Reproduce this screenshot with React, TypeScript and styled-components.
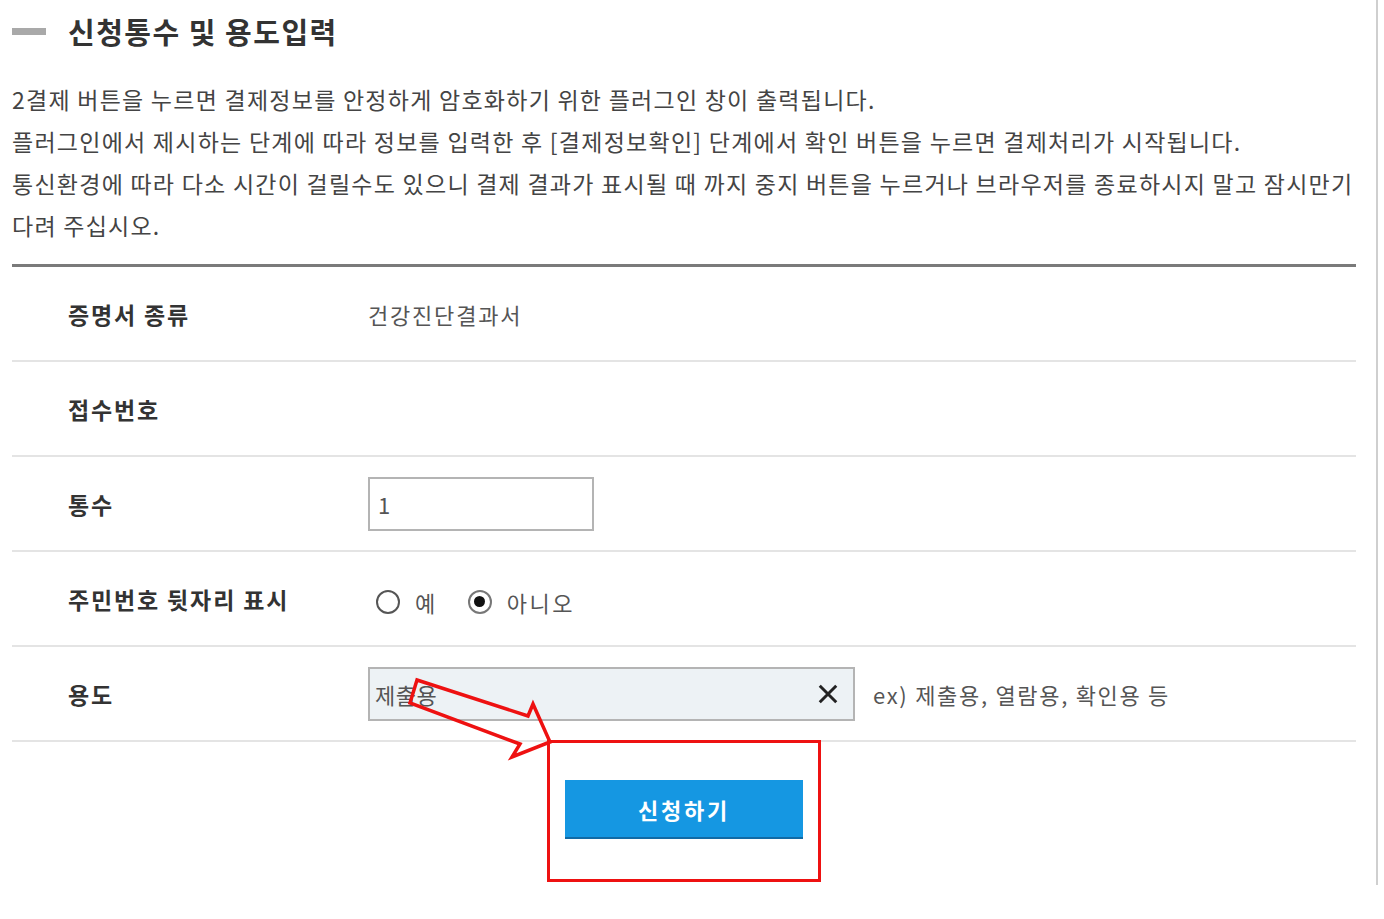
import React from "react";
import styled, { createGlobalStyle } from "styled-components";

const GlobalStyle = createGlobalStyle`
    html, body {
        margin: 0;
        padding: 0;
        background: #ffffff;
    }
    body {
        font-family: "Noto Sans CJK KR", "Noto Sans", sans-serif;
        color: #333;
    }
`;

const descLines = [
    "2결제 버튼을 누르면 결제정보를 안정하게 암호화하기 위한 플러그인 창이 출력됩니다.",
    "플러그인에서 제시하는 단계에 따라 정보를 입력한 후 [결제정보확인] 단계에서 확인 버튼을 누르면 결제처리가 시작됩니다.",
    "통신환경에 따라 다소 시간이 걸릴수도 있으니 결제 결과가 표시될 때 까지 중지 버튼을 누르거나 브라우저를 종료하시지 말고 잠시만기",
    "다려 주십시오.",
];

const App: React.FC = () => {
    return (
        <Page>
            <GlobalStyle />
            <Frame>
                <TitleBar>
                    <TitleMark />
                    <Title>신청통수 및 용도입력</Title>
                </TitleBar>

                <Description>
                    {descLines.map((line) => (
                        <DescLine key={line}>{line}</DescLine>
                    ))}
                </Description>

                <Table>
                    <Row>
                        <Label>증명서 종류</Label>
                        <Value>건강진단결과서</Value>
                    </Row>
                    <Row>
                        <Label>접수번호</Label>
                        <Value />
                    </Row>
                    <Row>
                        <Label>통수</Label>
                        <Value>
                            <CountInput>1</CountInput>
                        </Value>
                    </Row>
                    <Row>
                        <Label>주민번호 뒷자리 표시</Label>
                        <Value>
                            <RadioGroup>
                                <RadioItem>
                                    <RadioCircle />
                                    <RadioText>예</RadioText>
                                </RadioItem>
                                <RadioItem>
                                    <RadioCircle checked />
                                    <RadioText>아니오</RadioText>
                                </RadioItem>
                            </RadioGroup>
                        </Value>
                    </Row>
                    <Row>
                        <Label>용도</Label>
                        <Value>
                            <PurposeInput>
                                <PurposeText>제출용</PurposeText>
                                <ClearIcon viewBox="0 0 24 24">
                                    <path d="M3 3 L21 21 M21 3 L3 21" />
                                </ClearIcon>
                            </PurposeInput>
                            <Hint>ex) 제출용, 열람용, 확인용 등</Hint>
                        </Value>
                    </Row>
                </Table>

                <ButtonSection>
                    <Highlight>
                        <SubmitButton>신청하기</SubmitButton>
                    </Highlight>
                </ButtonSection>
            </Frame>

            <Arrow viewBox="0 0 160 100">
                <polygon points="17,10 128,46 133,34 150,72 112,87 120,74 10,33" />
            </Arrow>
        </Page>
    );
};

export default App;

const Page = styled.div`
    position: relative;
    width: 1384px;
    height: 919px;
    overflow: hidden;
    background: #fff;
`;

const Frame = styled.div`
    width: 1378px;
    height: 885px;
    box-sizing: border-box;
    border-right: 2px solid #cfcfcf;
    padding: 11px 20px 0 12px;
`;

const TitleBar = styled.div`
    display: flex;
    align-items: center;
    height: 40px;
    gap: 22px;
`;

const TitleMark = styled.div`
    width: 34px;
    height: 7px;
    background: #a9a9a9;
`;

const Title = styled.h2`
    margin: 0;
    font-size: 29px;
    font-weight: 700;
    color: #333;
    letter-spacing: 1.5px;
    line-height: 40px;
`;

const Description = styled.div`
    margin-top: 27px;
    font-size: 23px;
    line-height: 42px;
    color: #444;
    letter-spacing: 1.25px;
`;

const DescLine = styled.div`
    white-space: nowrap;
`;

const Table = styled.div`
    margin-top: 18px;
    border-top: 3px solid #7a7a7a;
`;

const Row = styled.div`
    display: grid;
    grid-template-columns: 356px 1fr;
    align-items: center;
    height: 93px;
    border-bottom: 2px solid #e4e4e4;
`;

const Label = styled.div`
    padding-left: 56px;
    font-size: 23px;
    font-weight: 700;
    color: #333;
    letter-spacing: 1.85px;
`;

const Value = styled.div`
    display: flex;
    align-items: center;
    font-size: 22px;
    color: #555;
    letter-spacing: 1.8px;
`;

const CountInput = styled.div`
    box-sizing: border-box;
    width: 226px;
    height: 54px;
    border: 2px solid #b4b4b4;
    padding-left: 8px;
    display: flex;
    align-items: center;
    font-size: 22px;
    color: #555;
`;

const RadioGroup = styled.div`
    display: flex;
    align-items: center;
    gap: 30px;
    padding-left: 8px;
    padding-top: 6px;
`;

const RadioItem = styled.label`
    display: flex;
    align-items: center;
    gap: 15px;
`;

const RadioCircle = styled.span<{ checked?: boolean }>`
    box-sizing: border-box;
    width: 24px;
    height: 24px;
    border-radius: 50%;
    border: 2px solid ${({ checked }) => (checked ? "#777" : "#555")};
    background: #fff;
    display: flex;
    align-items: center;
    justify-content: center;

    &::after {
        content: "";
        display: ${({ checked }) => (checked ? "block" : "none")};
        width: 11px;
        height: 11px;
        border-radius: 50%;
        background: #111;
    }
`;

const RadioText = styled.span`
    font-size: 22px;
    color: #555;
    letter-spacing: 2.5px;
`;

const PurposeInput = styled.div`
    box-sizing: border-box;
    width: 487px;
    height: 54px;
    border: 2px solid #b4b4b4;
    background: #edf2f5;
    padding: 0 14px 0 5px;
    display: flex;
    align-items: center;
    justify-content: space-between;
`;

const PurposeText = styled.span`
    font-size: 22px;
    color: #555;
    letter-spacing: 0.5px;
`;

const ClearIcon = styled.svg`
    width: 22px;
    height: 22px;
    fill: none;
    stroke: #222;
    stroke-width: 3.2;
`;

const Hint = styled.span`
    margin-left: 18px;
    font-size: 22px;
    color: #555;
    letter-spacing: 1.7px;
`;

const ButtonSection = styled.div`
    display: flex;
    justify-content: center;
    margin-top: -2px;
`;

const Highlight = styled.div`
    border: 3px solid #ee1111;
    padding: 37px 15px 40px;
`;

const SubmitButton = styled.button`
    width: 238px;
    height: 59px;
    border: none;
    border-bottom: 2px solid #116aa5;
    background: #1597e2;
    color: #fff;
    font-family: "Noto Sans CJK KR", "Noto Sans", sans-serif;
    font-size: 22px;
    font-weight: 700;
    letter-spacing: 2.8px;
    padding: 0;
`;

const Arrow = styled.svg`
    position: absolute;
    left: 400px;
    top: 670px;
    width: 160px;
    height: 100px;
    fill: none;
    stroke: #ee1111;
    stroke-width: 3.5;
    stroke-linejoin: miter;
`;
